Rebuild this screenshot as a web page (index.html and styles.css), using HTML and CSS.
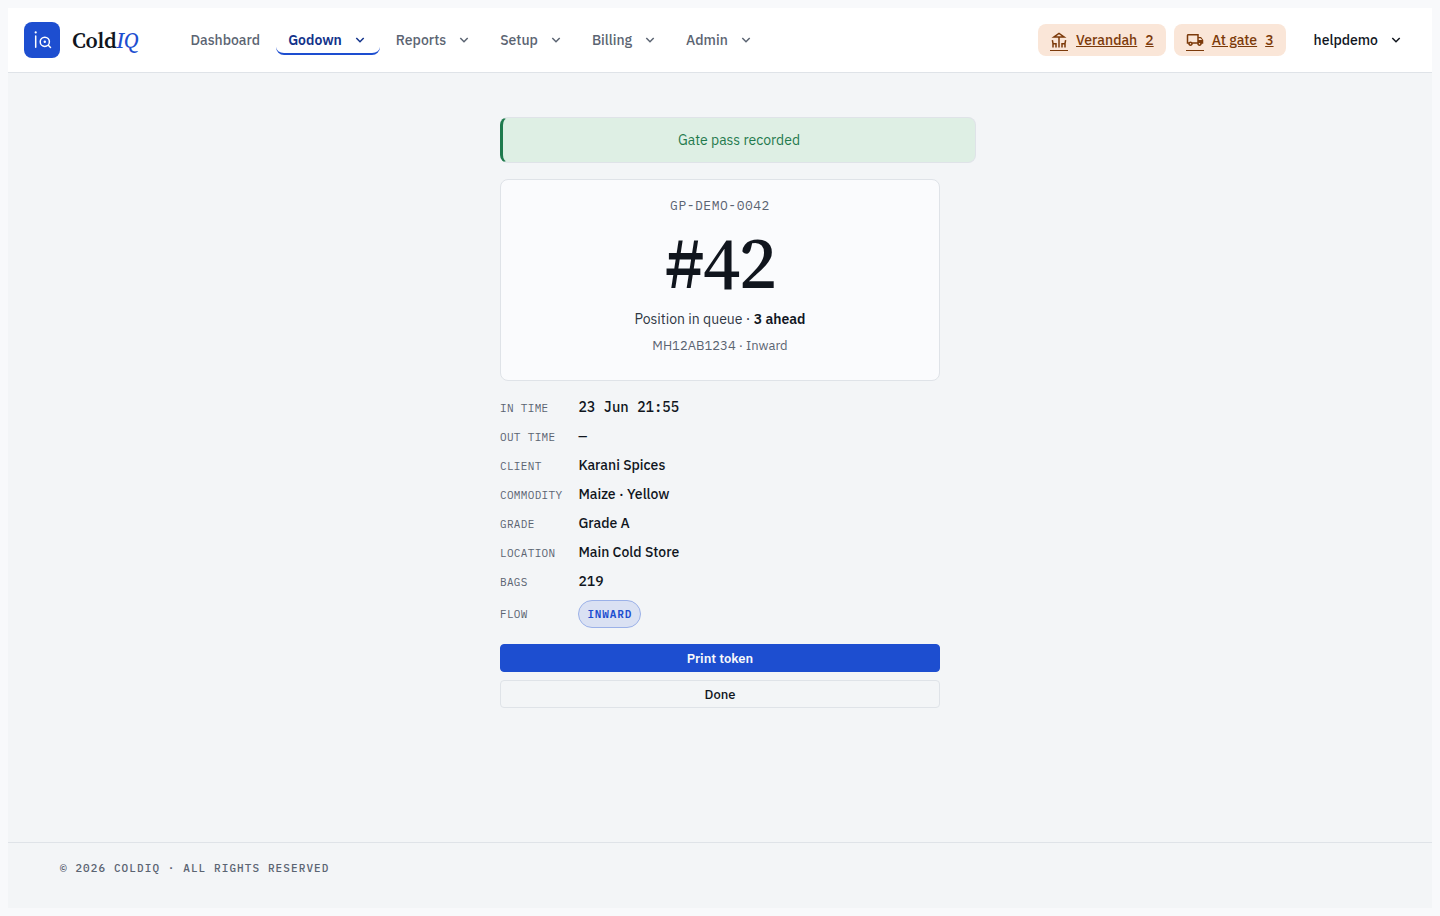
FILE: index.html
```html
<!DOCTYPE html>
<html lang="en">
<head>
    <meta charset="UTF-8">
    <meta name="viewport" content="width=device-width, initial-scale=1.0">
    <title>Gate pass - ColdIQ</title>
    <link rel="stylesheet" href="styles.css">
</head>
<body>
    <svg width="0" height="0" class="sprite" aria-hidden="true">
        <symbol id="chevron" viewBox="0 0 14 14">
            <path d="M3.3 5 L7 8.7 L10.7 5" fill="none" stroke="currentColor" stroke-width="1.5"/>
        </symbol>
    </svg>

    <div class="app">
        <header class="topbar">
            <a class="brand" href="#">
                <svg class="brand-mark" viewBox="0 0 36 36" aria-hidden="true">
                    <rect width="36" height="36" rx="8" fill="#1d4ed0"/>
                    <g fill="none" stroke="#fff" stroke-width="1.5" stroke-linecap="round">
                        <path d="M11.7 14v11.3"/>
                        <circle cx="20.8" cy="19.8" r="4.6"/>
                        <path d="M24.3 23.3l2.2 2.2"/>
                    </g>
                    <circle cx="11.7" cy="10.4" r="1.1" fill="#fff"/>
                    <circle cx="20.8" cy="19.8" r="1.2" fill="#fff"/>
                </svg>
                <span class="brand-name">Cold<em>IQ</em></span>
            </a>

            <nav class="nav">
                <a class="nav-item" href="#">Dashboard</a>
                <button class="nav-item active" type="button">Godown <svg class="chevron"><use href="#chevron"/></svg></button>
                <button class="nav-item" type="button">Reports <svg class="chevron"><use href="#chevron"/></svg></button>
                <button class="nav-item" type="button">Setup <svg class="chevron"><use href="#chevron"/></svg></button>
                <button class="nav-item" type="button">Billing <svg class="chevron"><use href="#chevron"/></svg></button>
                <button class="nav-item" type="button">Admin <svg class="chevron"><use href="#chevron"/></svg></button>
            </nav>

            <div class="topbar-right">
                <a class="pill" href="#">
                    <span class="pill-icon">
                        <svg viewBox="0 0 24 24" aria-hidden="true">
                            <path d="M22 9L12 2 2 9h9v13h2V9h9zM12 4.44L15.66 7H8.34L12 4.44z"/>
                            <path d="M4.14 12l-1.96.37.82 4.37V22h2l.02-4H7v4h2v-6H4.9l-.76-4z"/>
                            <path d="M19.1 16H15v6h2v-4h1.98l.02 4h2v-5.26l.82-4.37-1.96-.37-.76 4z"/>
                        </svg>
                    </span>
                    <span class="pill-text">Verandah</span>
                    <span class="pill-text">2</span>
                </a>
                <a class="pill" href="#">
                    <span class="pill-icon">
                        <svg viewBox="0 0 24 24" aria-hidden="true">
                            <path d="M20 8h-3V4H3c-1.1 0-2 .9-2 2v11h2c0 1.66 1.34 3 3 3s3-1.34 3-3h6c0 1.66 1.34 3 3 3s3-1.34 3-3h2v-5l-3-4zm-.5 1.5l1.96 2.5H17V9.5h2.5zM6 18c-.55 0-1-.45-1-1s.45-1 1-1 1 .45 1 1-.45 1-1 1zm2.22-3c-.55-.61-1.33-1-2.22-1s-1.67.39-2.22 1H3V6h12v9H8.22zM18 18c-.55 0-1-.45-1-1s.45-1 1-1 1 .45 1 1-.45 1-1 1z"/>
                        </svg>
                    </span>
                    <span class="pill-text">At gate</span>
                    <span class="pill-text">3</span>
                </a>
                <button class="nav-item user" type="button">helpdemo <svg class="chevron"><use href="#chevron"/></svg></button>
            </div>
        </header>

        <main class="token-page">
            <div class="alert" role="status">Gate pass recorded</div>

            <section class="token-card">
                <div class="token-ref">GP-DEMO-0042</div>
                <h1 class="token-number">#42</h1>
                <p class="token-queue">Position in queue · <strong>3 ahead</strong></p>
                <p class="token-meta">MH12AB1234 · Inward</p>
            </section>

            <dl class="details">
                <dt>In time</dt>
                <dd class="mono">23 Jun 21:55</dd>
                <dt>Out time</dt>
                <dd class="mono">—</dd>
                <dt>Client</dt>
                <dd>Karani Spices</dd>
                <dt>Commodity</dt>
                <dd>Maize · Yellow</dd>
                <dt>Grade</dt>
                <dd>Grade A</dd>
                <dt>Location</dt>
                <dd>Main Cold Store</dd>
                <dt>Bags</dt>
                <dd>219</dd>
                <dt>Flow</dt>
                <dd><span class="badge">Inward</span></dd>
            </dl>

            <div class="actions">
                <button class="btn btn-primary" type="button">Print token</button>
                <button class="btn" type="button">Done</button>
            </div>
        </main>

        <footer class="footer">© 2026 ColdIQ · All rights reserved</footer>
    </div>
</body>
</html>
```
FILE: styles.css
```css
* {
    box-sizing: border-box;
}
body {
    margin: 8px;
    background: #f8f9fb;
    color: #10151d;
    font-family: "IBM Plex Sans", Roboto, sans-serif;
    font-size: 14px;
    line-height: 21px;
}
button {
    font: inherit;
    cursor: pointer;
}
.sprite {
    display: block;
}
.app {
    display: flex;
    flex-direction: column;
    min-height: calc(100vh - 16px);
    background: #f3f5f7;
}

/* top bar */
.topbar {
    display: flex;
    align-items: center;
    height: 65px;
    padding: 0 16px;
    background: #fff;
    border-bottom: 1px solid #dfe3e8;
}
.brand {
    display: flex;
    align-items: center;
    gap: 12px;
    margin-right: 40px;
    color: #10151d;
    text-decoration: none;
}
.brand-mark {
    width: 36px;
    height: 36px;
}
.brand-name {
    font-family: "Source Serif 4", "Liberation Serif", serif;
    font-size: 22px;
    font-weight: 600;
    letter-spacing: -0.01em;
    line-height: 32px;
}
.brand-name em {
    color: #1d4ed0;
    font-weight: 500;
}
.nav {
    display: flex;
    gap: 4px;
}
.nav-item {
    display: flex;
    align-items: center;
    gap: 11px;
    height: 30px;
    padding: 0 12px;
    background: none;
    border: solid transparent;
    border-width: 2px 0;
    border-radius: 8px;
    color: #5b6472;
    font-weight: 500;
    text-decoration: none;
}
.nav-item.active {
    border-bottom-color: #1d4ed0;
    color: #12328a;
    font-weight: 600;
}
.chevron {
    width: 14px;
    height: 14px;
}
.nav .chevron {
    margin-right: 1px;
}
.topbar-right {
    display: flex;
    align-items: center;
    gap: 8px;
    margin-left: auto;
}
.user {
    margin-left: 8px;
    padding-right: 13px;
    color: #10151d;
}
.pill {
    display: flex;
    align-items: center;
    gap: 8px;
    height: 32px;
    padding: 0 12px;
    background: #fae6d8;
    border-radius: 8px;
    color: #7c3a0a;
    font-weight: 500;
    text-decoration: none;
}
.pill-text {
    text-decoration: underline;
}
.pill-icon {
    border-bottom: 1px solid #7c3a0a;
    height: 20px;
    margin-top: 2px;
}
.pill-icon svg {
    display: block;
    width: 18px;
    height: 18px;
    fill: currentColor;
}

/* token */
.token-page {
    flex: 1;
    width: 100%;
    max-width: 440px;
    margin: 0 auto;
    padding: 44px 0;
}
.alert {
    box-sizing: content-box;
    width: 100%;
    padding: 12px 16px;
    margin-bottom: 16px;
    background: #deefe4;
    border: 1px solid #dfe3e8;
    border-left: 3px solid #1f7a4d;
    border-radius: 8px;
    color: #1f7a4d;
    line-height: 20px;
    text-align: center;
}
.token-card {
    padding: 16px 24px 24px;
    margin-bottom: 16px;
    background: #fafbfd;
    border: 1px solid #dfe3e8;
    border-radius: 8px;
    text-align: center;
}
.token-ref {
    color: #5b6472;
    font-family: "IBM Plex Mono", "Liberation Mono", monospace;
    font-size: 13px;
    letter-spacing: 0.04em;
    line-height: 20px;
}
.token-number {
    margin: 10px 0;
    font-family: "Source Serif 4", "Liberation Serif", serif;
    font-size: 74px;
    font-weight: 500;
    letter-spacing: -0.02em;
    line-height: 72px;
}
.token-queue {
    margin: 0 0 6px;
    color: #2f3744;
    line-height: 22px;
}
.token-queue strong {
    color: #10151d;
    font-weight: 600;
}
.token-meta {
    margin: 0;
    color: #5b6472;
    font-size: 13px;
    line-height: 20px;
}
.details {
    display: grid;
    grid-template-columns: max-content 1fr;
    gap: 8px 16px;
    align-items: baseline;
    margin: 0 0 16px;
}
.details dt {
    color: #5b6472;
    font-family: "IBM Plex Mono", "Liberation Mono", monospace;
    font-size: 11px;
    letter-spacing: 0.03em;
    line-height: 20px;
    text-transform: uppercase;
}
.details dt:last-of-type {
    align-self: center;
}
.details dd {
    margin: 0;
    font-weight: 500;
}
.details .mono {
    font-family: "IBM Plex Mono", "Liberation Mono", monospace;
}
.badge {
    display: inline-block;
    padding: 0 8px;
    background: #dae1f3;
    border: 1px solid #9bb1e8;
    border-radius: 14px;
    color: #1d4ed0;
    font-family: "IBM Plex Mono", "Liberation Mono", monospace;
    font-size: 11px;
    font-weight: 600;
    letter-spacing: 0.08em;
    line-height: 26px;
    text-transform: uppercase;
    vertical-align: top;
}
.actions {
    display: grid;
    gap: 8px;
}
.btn {
    height: 28px;
    padding: 1px 12px 0;
    background: transparent;
    border: 1px solid #dfe3e8;
    border-radius: 4px;
    color: #10151d;
    font-size: 13px;
    font-weight: 500;
    line-height: 20px;
}
.btn-primary {
    background: #1d4ed0;
    border-color: #1d4ed0;
    color: #f8f9fb;
    font-weight: 600;
}

.footer {
    height: 66px;
    padding: 15px 52px;
    border-top: 1px solid #dfe3e8;
    color: #5b6472;
    font-family: "IBM Plex Mono", "Liberation Mono", monospace;
    font-size: 11px;
    font-weight: 500;
    letter-spacing: 0.1em;
    text-transform: uppercase;
}
```
